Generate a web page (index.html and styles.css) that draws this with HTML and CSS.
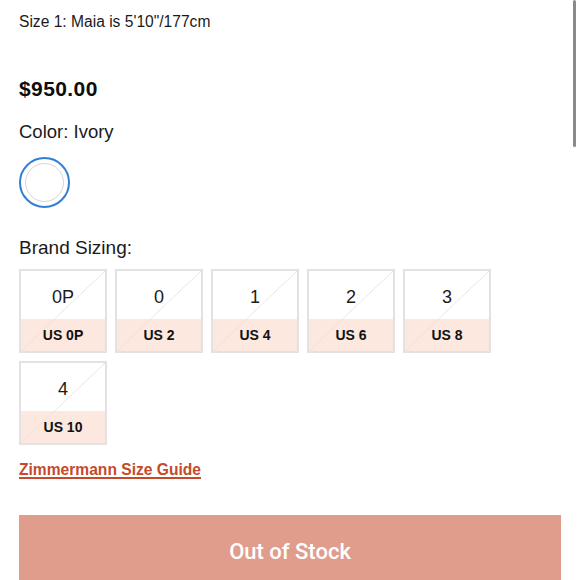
FILE: index.html
```html
<!DOCTYPE html>
<html>
<head>
<meta charset="utf-8">
<link rel="stylesheet" href="styles.css">
</head>
<body>
<div class="page">
  <p class="model">Size 1: Maia is 5'10"/177cm</p>
  <p class="price">$950.00</p>
  <p class="label color-label">Color: Ivory</p>
  <div class="swatch"><span class="swatch-inner"></span></div>
  <p class="label sizing-label">Brand Sizing:</p>
  <div class="sizes">
    <div class="size"><span class="size-num">0P</span><span class="size-us">US 0P</span></div>
    <div class="size"><span class="size-num">0</span><span class="size-us">US 2</span></div>
    <div class="size"><span class="size-num">1</span><span class="size-us">US 4</span></div>
    <div class="size"><span class="size-num">2</span><span class="size-us">US 6</span></div>
    <div class="size"><span class="size-num">3</span><span class="size-us">US 8</span></div>
    <div class="size"><span class="size-num">4</span><span class="size-us">US 10</span></div>
  </div>
  <a class="guide" href="#">Zimmermann Size Guide</a>
  <button class="stock">Out of Stock</button>
</div>
<div class="scrollbar"></div>
</body>
</html>
```
FILE: styles.css
```css
html, body {
  margin: 0;
  padding: 0;
  background: #fff;
  overflow: hidden;
}
body {
  font-family: "Liberation Sans", Arial, sans-serif;
  color: #111;
}
.page {
  padding: 12px 19px 0 19px;
  display: flex;
  flex-direction: column;
  align-items: flex-start;
}
p { margin: 0; }
.model {
  font-size: 15.6px;
  line-height: 20px;
  color: #1a1a1a;
}
.price {
  margin-top: 44px;
  font-size: 21px;
  line-height: 25px;
  letter-spacing: 0.4px;
  font-weight: bold;
  color: #0d0d0d;
}
.label {
  font-family: "Liberation Sans", Arial, sans-serif;
  font-size: 18.5px;
  line-height: 22px;
  color: #1a1a1a;
}
.color-label { margin-top: 20px; }
.sizing-label { margin-top: 29px; font-size: 19px; }
.swatch {
  margin-top: 14px;
  width: 47px;
  height: 47px;
  border: 2px solid #2f7fd6;
  border-radius: 50%;
  display: flex;
  align-items: center;
  justify-content: center;
}
.swatch-inner {
  width: 39px;
  height: 39px;
  border: 1.5px solid #d6d6d6;
  border-radius: 50%;
  box-sizing: border-box;
}
.sizes {
  margin-top: 10px;
  display: grid;
  grid-template-columns: repeat(5, 88px);
  gap: 8px;
}
.size {
  box-sizing: border-box;
  width: 88px;
  height: 84px;
  border: 2px solid #e2e2e2;
  display: flex;
  flex-direction: column;
  background:
    linear-gradient(to bottom right, transparent calc(50% - 0.6px), #e2e2e2 50%, transparent calc(50% + 0.6px));
}
.size-num {
  height: 48px;
  display: flex;
  align-items: center;
  justify-content: center;
  font-size: 18px;
  color: #1a1a1a;
  padding-top: 4px;
  box-sizing: border-box;
}
.size-us {
  flex: 1;
  display: flex;
  align-items: center;
  justify-content: center;
  background: rgba(251, 220, 206, 0.65);
  font-size: 14px;
  font-weight: bold;
  color: #111;
}
.guide {
  margin-top: 15px;
  font-size: 15.6px;
  line-height: 20px;
  font-weight: bold;
  color: #c54a2c;
  text-decoration: underline;
  text-underline-offset: 2px;
  text-decoration-thickness: 2px;
}
.stock {
  margin-top: 35px;
  width: 542px;
  height: 72px;
  border: none;
  background: #e09d8b;
  color: #fff;
  font-family: Roboto, "Liberation Sans", sans-serif;
  font-size: 22px;
  font-weight: 500;
  padding: 0;
}
.scrollbar {
  position: absolute;
  top: 0;
  right: 4px;
  width: 3px;
  height: 147px;
  background: #8a8a8a;
  border-radius: 2px;
}
```
